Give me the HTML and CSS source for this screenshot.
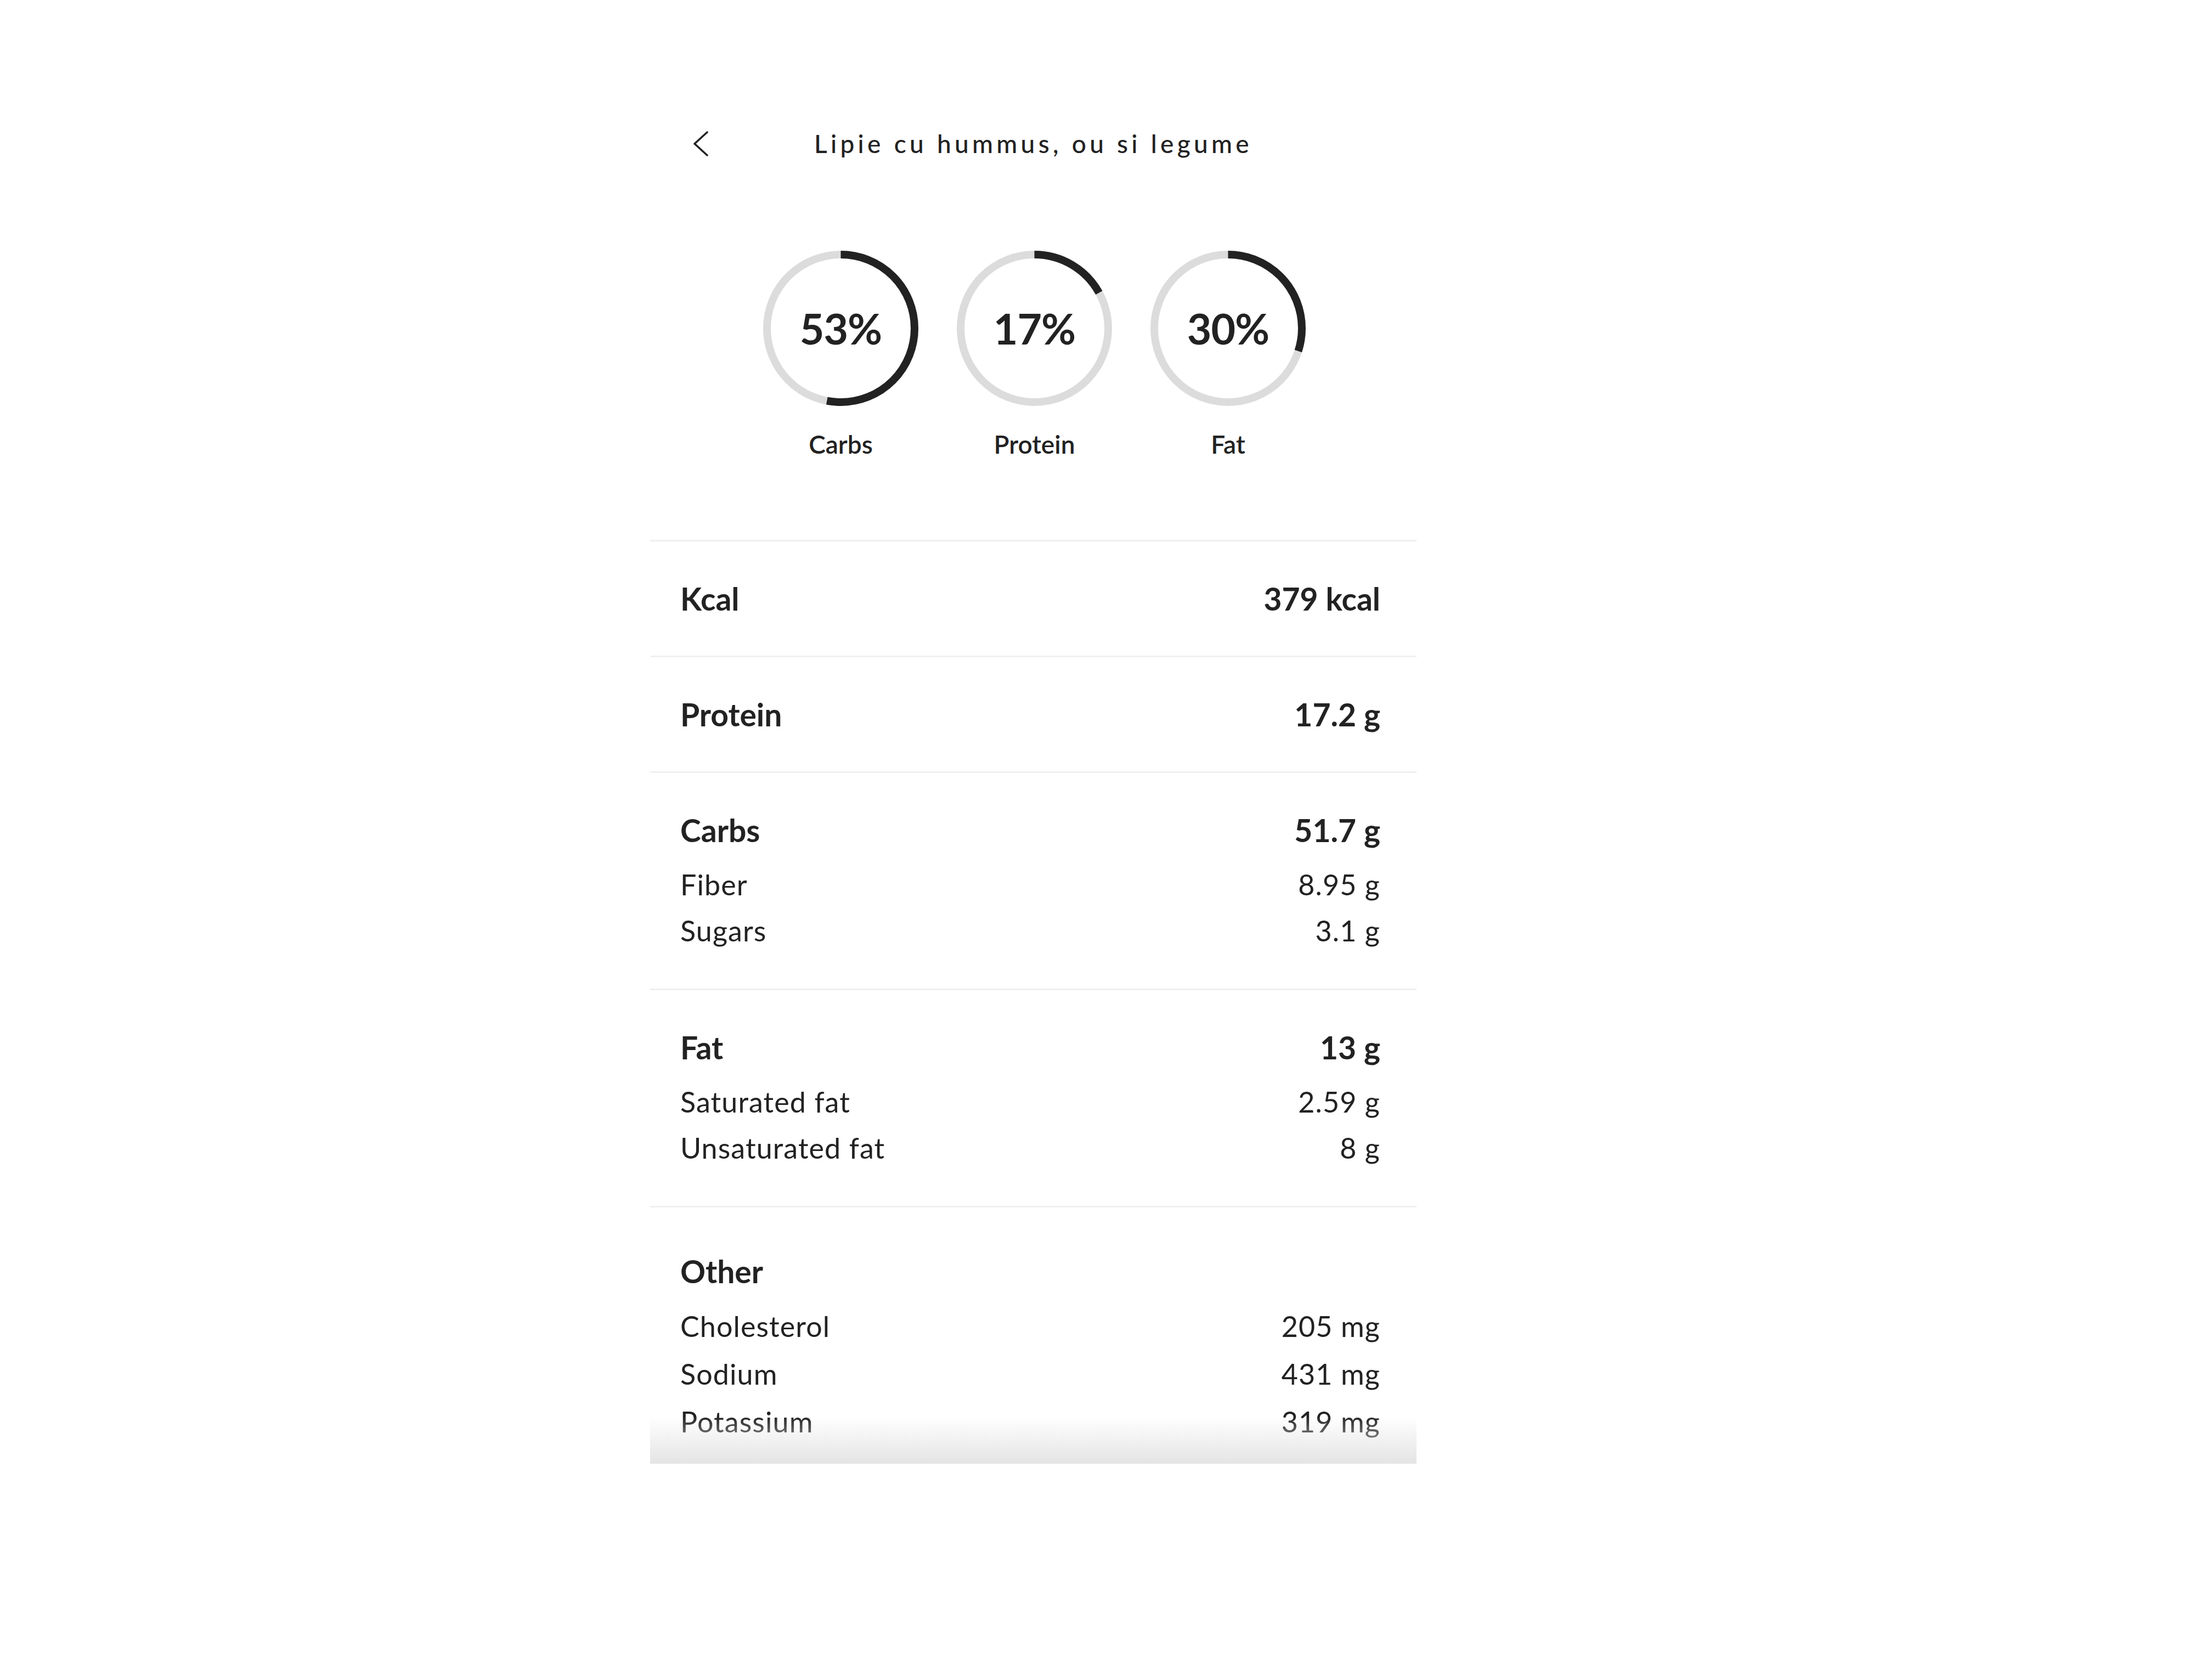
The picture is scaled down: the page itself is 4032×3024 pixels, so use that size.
FILE: index.html
```html
<!DOCTYPE html>
<html lang="ro">
<head>
<meta charset="UTF-8" />
<meta name="viewport" content="width=device-width, initial-scale=1" />
<title>Lipie cu hummus, ou si legume</title>
<link rel="stylesheet" href="styles.css">
</head>
<body>

<div class="screen">
  <header class="topbar">
    <button class="back" aria-label="Inapoi">
      <svg viewBox="0 0 28 46" width="28" height="46"><polyline points="26,2 3,23 26,44" /></svg>
    </button>
    <h1 class="title">Lipie cu hummus, ou si legume</h1>
    <span></span>
  </header>

  <div class="macros">
    <div class="macro">
      <div class="ring">
        <svg viewBox="0 0 283 283">
          <circle class="track" cx="141.5" cy="141.5" r="134.5" />
          <circle class="arc" cx="141.5" cy="141.5" r="134.5" pathLength="100" stroke-dasharray="53 100" transform="rotate(-90 141.5 141.5)" />
        </svg>
        <span class="pct">53%</span>
      </div>
      <div class="macro-name">Carbs</div>
    </div>
    <div class="macro">
      <div class="ring">
        <svg viewBox="0 0 283 283">
          <circle class="track" cx="141.5" cy="141.5" r="134.5" />
          <circle class="arc" cx="141.5" cy="141.5" r="134.5" pathLength="100" stroke-dasharray="17 100" transform="rotate(-90 141.5 141.5)" />
        </svg>
        <span class="pct">17%</span>
      </div>
      <div class="macro-name">Protein</div>
    </div>
    <div class="macro">
      <div class="ring">
        <svg viewBox="0 0 283 283">
          <circle class="track" cx="141.5" cy="141.5" r="134.5" />
          <circle class="arc" cx="141.5" cy="141.5" r="134.5" pathLength="100" stroke-dasharray="30 100" transform="rotate(-90 141.5 141.5)" />
        </svg>
        <span class="pct">30%</span>
      </div>
      <div class="macro-name">Fat</div>
    </div>
  </div>

  <div class="nutrients">
    <section class="group">
      <div class="row head"><span>Kcal</span><span>379 kcal</span></div>
    </section>
    <section class="group">
      <div class="row head"><span>Protein</span><span>17.2 g</span></div>
    </section>
    <section class="group">
      <div class="row head"><span>Carbs</span><span>51.7 g</span></div>
      <div class="subs">
        <div class="row"><span>Fiber</span><span>8.95 g</span></div>
        <div class="row"><span>Sugars</span><span>3.1 g</span></div>
      </div>
    </section>
    <section class="group">
      <div class="row head"><span>Fat</span><span>13 g</span></div>
      <div class="subs">
        <div class="row"><span>Saturated fat</span><span>2.59 g</span></div>
        <div class="row"><span>Unsaturated fat</span><span>8 g</span></div>
      </div>
    </section>
    <section class="group other">
      <div class="row head"><span>Other</span></div>
      <div class="subs">
        <div class="row"><span>Cholesterol</span><span>205 mg</span></div>
        <div class="row"><span>Sodium</span><span>431 mg</span></div>
        <div class="row"><span>Potassium</span><span>319 mg</span></div>
      </div>
    </section>
  </div>
</div>

</body>
</html>
```

FILE: styles.css
```css
body {
  margin: 0;
  font-family: 'Lato', 'Noto Sans', sans-serif;
  background-color: #fff;
  color: #222;
}
.screen {
  width: 1397px;
  margin-left: 1185px;
}

/* bara de sus */
.topbar {
  display: grid;
  grid-template-columns: 1fr auto 1fr;
  align-items: center;
  padding-top: 232px;
}
.back {
  justify-self: start;
  margin-left: 78px;
  padding: 0;
  border: none;
  background: none;
  width: 28px;
  height: 46px;
  cursor: pointer;
}
.back svg {
  display: block;
  fill: none;
  stroke: #222;
  stroke-width: 3.5;
  stroke-linecap: round;
  stroke-linejoin: round;
}
.title {
  margin: 0;
  font-size: 46px;
  line-height: 60px;
  font-weight: 500;
  letter-spacing: 6.3px;
  color: #222;
}

/* cercurile cu procente */
.macros {
  display: flex;
  justify-content: center;
  gap: 70px;
  margin-top: 165px;
  padding-left: 4px;
}
.macro {
  width: 283px;
  text-align: center;
}
.ring {
  display: grid;
  place-items: center;
  width: 283px;
  height: 283px;
}
.ring svg,
.ring .pct {
  grid-area: 1 / 1;
}
.ring svg {
  width: 283px;
  height: 283px;
  display: block;
}
.ring circle {
  fill: none;
  stroke-width: 14;
}
.ring .track {
  stroke: #dcdcdc;
}
.ring .arc {
  stroke: #222;
}
.pct {
  font-size: 77px;
  font-weight: 700;
  line-height: 1;
  letter-spacing: -1px;
}
.macro-name {
  margin-top: 42px;
  font-size: 46px;
  line-height: 56px;
  font-weight: 600;
}

/* lista de nutrienti */
.nutrients {
  position: relative;
  margin-top: 146px;
  height: 1684px;
  overflow: hidden;
}
.nutrients::after {
  content: "";
  position: absolute;
  left: 0;
  right: 0;
  bottom: 0;
  height: 86px;
  background: linear-gradient(to bottom, rgba(230, 230, 230, 0), #e4e4e4);
}
.group {
  border-top: 3px solid #f0f0f0;
  padding: 64px 66px 64px 55px;
}
.group.other {
  padding-top: 76px;
}
.row {
  display: flex;
  justify-content: space-between;
  align-items: center;
  font-size: 52px;
  line-height: 84px;
  letter-spacing: 1.1px;
}
.row.head {
  font-size: 57px;
  line-height: 80px;
  font-weight: 700;
  letter-spacing: 0;
}
.subs {
  margin-top: 17px;
}
.other .subs .row {
  line-height: 87px;
}
```
